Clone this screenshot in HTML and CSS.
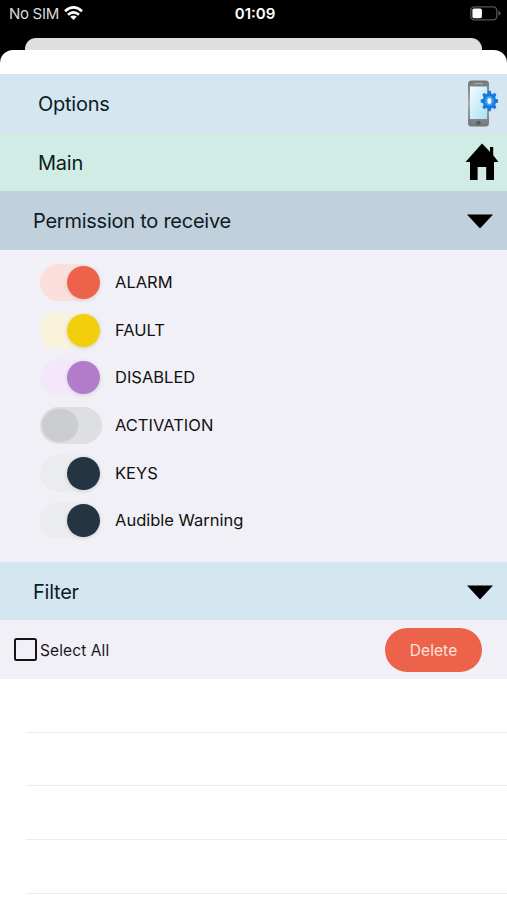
FILE: index.html
```
<!DOCTYPE html>
<html lang="en">
<head>
<meta charset="utf-8">
<title>Options</title>
<link rel="stylesheet" href="styles.css">
</head>
<body>
<header class="status">
  <div class="carrier"><span>No SIM</span>
    <svg width="19" height="15" viewBox="0 0 19 15" fill="none" stroke="#fff" stroke-width="2.6"><path d="M1 5.200Q9.500-2.400 18 5.200M4 8.700Q9.500 3.900 15 8.700"/><path d="M9.500 14 6.200 10.800Q9.500 8 12.800 10.800Z" fill="#fff" stroke="none"/></svg>
  </div>
  <time class="clock">01:09</time>
  <svg class="battery" width="31" height="15" viewBox="0 0 31 15"><rect x=".8" y=".8" width="26" height="13" rx="3.6" fill="none" stroke="#55565a" stroke-width="1.3"/><rect x="2.4" y="2.5" width="9.5" height="9.8" rx="1.7" fill="#fff"/><path d="M28.4 4.8q2.2.7 2.2 2.5t-2.2 2.5z" fill="#55565a"/></svg>
</header>
<div class="back-sheet"></div>
<main class="sheet">
  <div class="row options"><span>Options</span>
    <svg width="33" height="48" viewBox="0 0 33 48">
      <defs>
        <linearGradient id="case" x2="0" y2="1"><stop stop-color="#737578"/><stop offset=".5" stop-color="#aaa"/><stop offset="1" stop-color="#737477"/></linearGradient>
        <linearGradient id="screen" x2="1" y2="1"><stop stop-color="#f4fcff"/><stop offset="1" stop-color="#a8e0f5"/></linearGradient>
        <path id="tooth" d="M21.900 11.800h3l1.200 5h-5.400zM21.900 32.200h3l1.200-5h-5.400z"/>
      </defs>
      <rect x="2" y="1.500" width="21" height="46" rx="3.500" fill="url(#case)"/>
      <rect x="4" y="7.500" width="17" height="32.500" fill="url(#screen)"/>
      <path d="M8 4.500h9" stroke="#a8aaac" stroke-width="1.200"/>
      <rect x="10.500" y="42" width="4" height="3.500" rx="1" fill="#55585c"/>
      <g fill="#1a77dc"><ellipse cx="23.400" cy="22" rx="6.600" ry="7.800"/>
        <g transform="translate(3.500 0) scale(.85 1)"><use href="#tooth"/><use href="#tooth" transform="rotate(45 23.400 22)"/><use href="#tooth" transform="rotate(90 23.400 22)"/><use href="#tooth" transform="rotate(135 23.400 22)"/></g>
      </g>
      <ellipse cx="23.400" cy="22" rx="4.300" ry="5" fill="#3d9ff5"/><ellipse cx="23.400" cy="22" rx="2" ry="2.900" fill="#e9f9ff"/>
    </svg>
  </div>
  <div class="row home"><span>Main</span>
    <svg width="34" height="38" viewBox="0 0 34 38"><path d="M17 .5 25 8.800V4h3.200v8.200L33.500 19H29v18H21.200V24H12.600v13H5V19H.5z"/></svg>
  </div>
  <div class="row permission"><span>Permission to receive</span>
    <svg class="arrow" width="26" height="15" viewBox="0 0 26 15"><path d="M0 .5h26L13 14.500z"/></svg>
  </div>
  <section class="toggles">
    <div class="toggle alarm"><i class="track"></i><span>ALARM</span></div>
    <div class="toggle fault"><i class="track"></i><span>FAULT</span></div>
    <div class="toggle disabled"><i class="track"></i><span>DISABLED</span></div>
    <div class="toggle activation"><i class="track off"></i><span>ACTIVATION</span></div>
    <div class="toggle keys"><i class="track"></i><span>KEYS</span></div>
    <div class="toggle audible"><i class="track"></i><span>Audible Warning</span></div>
  </section>
  <div class="row filter"><span>Filter</span>
    <svg class="arrow" width="26" height="15" viewBox="0 0 26 15"><path d="M0 .5h26L13 14.500z"/></svg>
  </div>
  <div class="actions">
    <i class="checkbox"></i><span class="select-all">Select All</span>
    <button class="delete">Delete</button>
  </div>
  <div class="list"><div class="item"></div><div class="item"></div><div class="item"></div><div class="item"></div></div>
</main>
</body>
</html>
```
FILE: styles.css
```
* { box-sizing: border-box; }
body {
  margin: 0;
  height: 900px;
  overflow: hidden;
  background: #000;
  color: #101a22;
  font-family: Inter, "Liberation Sans", sans-serif;
}
svg { display: block; flex: none; }
.status {
  height: 38px;
  padding: 6px 6px 0 9px;
  display: grid;
  grid-template-columns: 1fr auto 1fr;
  align-items: start;
  color: #fff;
  font-size: 15px;
  line-height: 16px;
}
.carrier { display: flex; gap: 5px; color: #ddd; letter-spacing: -.3px; }
.clock { font-weight: 600; letter-spacing: 0; }
.battery { justify-self: end; }
.back-sheet { height: 12px; margin: 0 25px; background: #dfdfdf; border-radius: 11px 11px 0 0; }
.sheet { height: 850px; padding-top: 24px; background: #fff; border-radius: 13px 13px 0 0; }
.row {
  height: 58.6px;
  padding: 0 8px 0 38px;
  display: flex;
  align-items: center;
  justify-content: space-between;
  font-size: 20px;
  letter-spacing: -.25px;
}
.row span { padding-top: 2px; }
.options { background: #d4e6f0; }
.home { background: #d0ece5; }
.permission { background: #c0d0dc; }
.filter { background: #d4e6f0; }
.permission, .filter { padding: 0 14px 0 33px; }
.arrow { margin-top: 2px; }
.toggles { height: 312px; padding: 9px 0 0 40px; background: #f0f0f6; }
.toggle { height: 47.65px; display: flex; align-items: center; gap: 13px; color: #111; font-size: 16.5px; }
.toggle span { padding-bottom: 1px; }
.track {
  width: 62px;
  height: 37px;
  padding: 2px;
  display: flex;
  justify-content: flex-end;
  border-radius: 19px;
  background: linear-gradient(90deg, var(--track) 35%, #f0f0f6 100%);
}
.track::before {
  content: "";
  width: 33px;
  height: 33px;
  border-radius: 50%;
  background: var(--knob);
  box-shadow: 0 1px 4px #0002;
}
.alarm { --track: #fbdeda; --knob: #ee614a; }
.fault { --track: #fbf2da; --knob: #f3ce0b; }
.disabled { --track: #f4e7fb; --knob: #b37cca; }
.activation { --track: #dedfe0; --knob: #cccdcf; }
.keys, .audible { --track: #ebecee; --knob: #243442; }
.off { justify-content: flex-start; background: var(--track); }
.off::before { width: 36px; box-shadow: 0 0 2px #0001; }
.actions { height: 58.5px; padding: 0 25px 0 14px; display: flex; align-items: center; background: #f0f0f6; color: #18181b; }
.checkbox { width: 23px; height: 23px; border: 2.5px solid #141417; border-radius: 2.5px; margin-right: 3px; }
.select-all { padding-top: 1px; font-size: 15.5px; letter-spacing: .1px; }
.delete { margin-left: auto; width: 97px; height: 44px; padding: 1px 0 0; border: 0; border-radius: 22px; background: #ed624b; color: #ffe2db; font: 15.5px Inter, "Liberation Sans", sans-serif; letter-spacing: .1px; }
.list { padding-left: 26px; }
.item { height: 53.7px; border-bottom: 1.5px solid #ececee; }
```
